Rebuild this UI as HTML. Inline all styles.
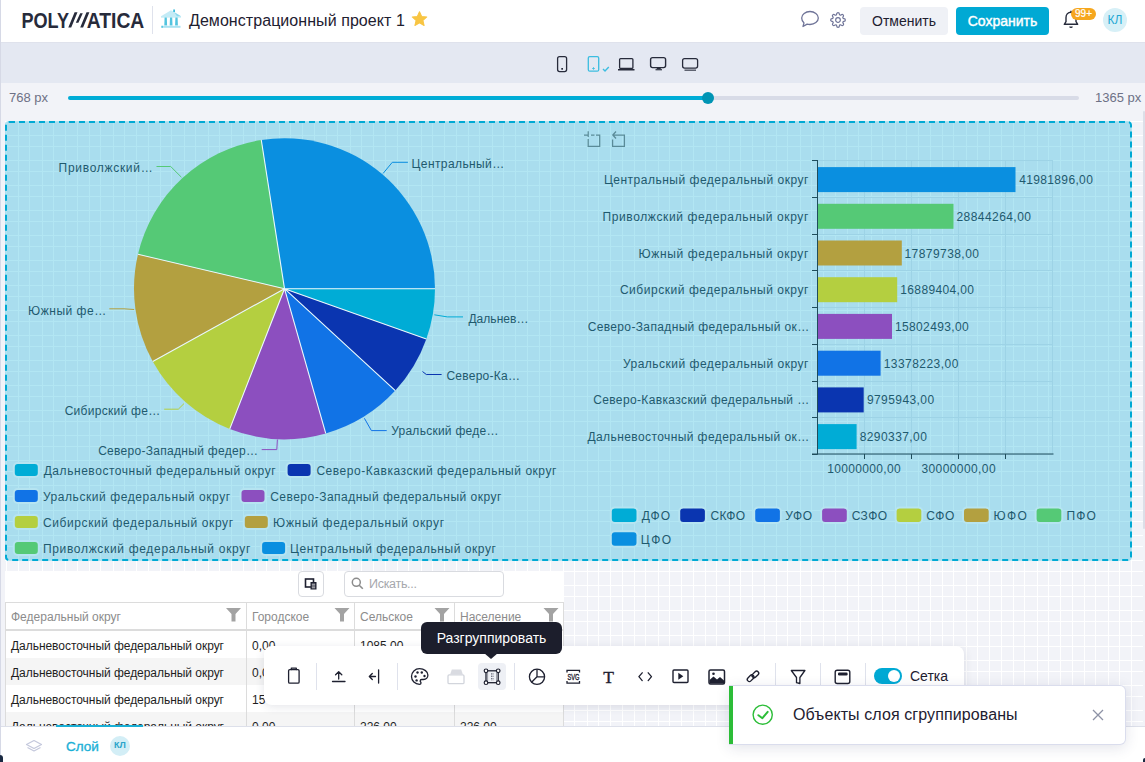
<!DOCTYPE html>
<html><head><meta charset="utf-8">
<style>
*{box-sizing:border-box;margin:0;padding:0}
html,body{width:1145px;height:762px;overflow:hidden;background:#f2f3f8;font-family:"Liberation Sans",sans-serif;color:#1e2030;position:relative}
.a{position:absolute}
#hdr{left:0;top:0;width:1145px;height:43px;background:#fff;border-bottom:1px solid #dfe2ec}
#strip{left:0;top:0;width:1px;height:762px;background:#d6d9e6;z-index:50}
#dev{left:0;top:43px;width:1145px;height:40px;background:#e4e8f2}
.t{white-space:nowrap;line-height:1}
.ct text{font-size:12px;fill:#1f5a6e;font-family:"Liberation Sans",sans-serif}

</style></head><body>
<svg class="a" style="left:0;top:0" width="1145" height="762"><path d="M6.5 121V762M18.5 121V762M29.5 121V762M42.5 121V762M53.5 121V762M65.5 121V762M77.5 121V762M89.5 121V762M100.5 121V762M113.5 121V762M124.5 121V762M136.5 121V762M148.5 121V762M160.5 121V762M171.5 121V762M184.5 121V762M195.5 121V762M208.5 121V762M219.5 121V762M231.5 121V762M243.5 121V762M255.5 121V762M266.5 121V762M279.5 121V762M290.5 121V762M302.5 121V762M314.5 121V762M326.5 121V762M337.5 121V762M350.5 121V762M361.5 121V762M373.5 121V762M385.5 121V762M397.5 121V762M408.5 121V762M421.5 121V762M432.5 121V762M444.5 121V762M456.5 121V762M468.5 121V762M479.5 121V762M492.5 121V762M503.5 121V762M515.5 121V762M527.5 121V762M539.5 121V762M550.5 121V762M563.5 121V762M574.5 121V762M587.5 121V762M598.5 121V762M610.5 121V762M622.5 121V762M634.5 121V762M645.5 121V762M658.5 121V762M669.5 121V762M681.5 121V762M693.5 121V762M705.5 121V762M716.5 121V762M729.5 121V762M740.5 121V762M752.5 121V762M764.5 121V762M776.5 121V762M787.5 121V762M800.5 121V762M811.5 121V762M823.5 121V762M835.5 121V762M847.5 121V762M858.5 121V762M871.5 121V762M882.5 121V762M895.5 121V762M906.5 121V762M918.5 121V762M930.5 121V762M942.5 121V762M953.5 121V762M966.5 121V762M977.5 121V762M989.5 121V762M1001.5 121V762M1013.5 121V762M1024.5 121V762M1037.5 121V762M1048.5 121V762M1060.5 121V762M1072.5 121V762M1084.5 121V762M1095.5 121V762M1108.5 121V762M1119.5 121V762M1131.5 121V762M5 121.5H1143M5 135.5H1143M5 146.5H1143M5 160.5H1143M5 171.5H1143M5 185.5H1143M5 196.5H1143M5 210.5H1143M5 221.5H1143M5 235.5H1143M5 246.5H1143M5 260.5H1143M5 271.5H1143M5 285.5H1143M5 296.5H1143M5 310.5H1143M5 321.5H1143M5 335.5H1143M5 346.5H1143M5 360.5H1143M5 371.5H1143M5 385.5H1143M5 396.5H1143M5 410.5H1143M5 421.5H1143M5 435.5H1143M5 446.5H1143M5 460.5H1143M5 471.5H1143M5 485.5H1143M5 496.5H1143M5 510.5H1143M5 521.5H1143M5 535.5H1143M5 546.5H1143M5 560.5H1143M5 571.5H1143M5 585.5H1143M5 596.5H1143M5 610.5H1143M5 621.5H1143M5 635.5H1143M5 646.5H1143M5 660.5H1143M5 671.5H1143M5 685.5H1143M5 696.5H1143M5 710.5H1143M5 721.5H1143M5 735.5H1143M5 746.5H1143M5 760.5H1143" stroke="#fff" stroke-width="1" fill="none" shape-rendering="crispEdges"/></svg>
<svg class="a" style="left:0;top:0" width="1145" height="762">
<rect x="5" y="121" width="1127" height="440" rx="4" fill="rgba(0,172,214,0.3)"/><rect x="6" y="122" width="1125" height="438" rx="3" fill="none" stroke="#00a9d4" stroke-width="2" stroke-dasharray="6 4"/>
<g>
<path fill="#00acd6" d="M284.5 288.7L435.00 288.70A150.5 150.5 0 0 1 426.35 339.00Z"/>
<path fill="#0a35b0" d="M284.5 288.7L426.35 339.00A150.5 150.5 0 0 1 395.29 390.56Z"/>
<path fill="#1173e6" d="M284.5 288.7L395.29 390.56A150.5 150.5 0 0 1 325.73 433.44Z"/>
<path fill="#8c4fbf" d="M284.5 288.7L325.73 433.44A150.5 150.5 0 0 1 229.79 428.90Z"/>
<path fill="#b4cf40" d="M284.5 288.7L229.79 428.90A150.5 150.5 0 0 1 152.75 361.45Z"/>
<path fill="#b3a040" d="M284.5 288.7L152.75 361.45A150.5 150.5 0 0 1 137.98 254.33Z"/>
<path fill="#55c976" d="M284.5 288.7L137.98 254.33A150.5 150.5 0 0 1 261.29 140.00Z"/>
<path fill="#0a8fe0" d="M284.5 288.7L261.29 140.00A150.5 150.5 0 0 1 435.00 288.70Z"/>
</g><path d="M284.5 288.7L435.00 288.70M284.5 288.7L426.35 339.00M284.5 288.7L395.29 390.56M284.5 288.7L325.73 433.44M284.5 288.7L229.79 428.90M284.5 288.7L152.75 361.45M284.5 288.7L137.98 254.33M284.5 288.7L261.29 140.00" stroke="#e9f7fb" stroke-width="1.1" fill="none"/>
<g stroke-width="1"><path d="M434.3 314.8L447.3 316.9L463 316.9" stroke="#00acd6" fill="none"/><path d="M422.5 371.5L426.3 374.5L441.6 374.5" stroke="#0a35b0" fill="none"/><path d="M364.4 418.3L371.4 430.6L386.7 430.6" stroke="#1173e6" fill="none"/><path d="M277.4 439.5L276.8 449.6L261.7 449.6" stroke="#8c4fbf" fill="none"/><path d="M184.1 403.5L178.3 409.2L164.2 409.2" stroke="#b4cf40" fill="none"/><path d="M134.1 309.5L124 308.8L109.3 308.8" stroke="#b3a040" fill="none"/><path d="M181.4 177.2L170.7 166.5L156.5 166.5" stroke="#55c976" fill="none"/><path d="M383.1 173.4L392.3 162.3L407.9 162.3" stroke="#0a8fe0" fill="none"/></g>
<g class="ct"><text x="468.42" y="322.6" textLength="59.98">Дальнев…</text><text x="446.38" y="380.3" textLength="73.54">Северо-Ка…</text><text x="391.14" y="435.2" textLength="107.30">Уральский феде…</text><text x="98.16" y="455.0" textLength="159.74">Северо-Западный федер…</text><text x="64.66" y="415.2" textLength="95.50">Сибирский фе…</text><text x="28.10" y="314.5" textLength="78.08">Южный фе…</text><text x="58.62" y="172.0" textLength="94.04">Приволжский…</text><text x="411.60" y="168.1" textLength="92.54">Центральный…</text></g>
<g class="ct"><rect x="12.8" y="462" width="27" height="16" rx="5" fill="#b6e4f1"/><rect x="14.8" y="464" width="23" height="12" rx="3" fill="#00acd6"/><text x="43.68" y="475.3" textLength="231.92">Дальневосточный федеральный округ</text><rect x="285.6" y="462" width="27" height="16" rx="5" fill="#b6e4f1"/><rect x="287.6" y="464" width="23" height="12" rx="3" fill="#0a35b0"/><text x="316.42" y="475.3" textLength="239.94">Северо-Кавказский федеральный округ</text><rect x="12.8" y="488" width="27" height="16" rx="5" fill="#b6e4f1"/><rect x="14.8" y="490" width="23" height="12" rx="3" fill="#1173e6"/><text x="42.88" y="501.3" textLength="187.24">Уральский федеральный округ</text><rect x="239.5" y="488" width="27" height="16" rx="5" fill="#b6e4f1"/><rect x="241.5" y="490" width="23" height="12" rx="3" fill="#8c4fbf"/><text x="270.16" y="501.3" textLength="231.18">Северо-Западный федеральный округ</text><rect x="12.8" y="514" width="27" height="16" rx="5" fill="#b6e4f1"/><rect x="14.8" y="516" width="23" height="12" rx="3" fill="#b4cf40"/><text x="42.88" y="527.3" textLength="190.24">Сибирский федеральный округ</text><rect x="242.8" y="514" width="27" height="16" rx="5" fill="#b6e4f1"/><rect x="244.8" y="516" width="23" height="12" rx="3" fill="#b3a040"/><text x="273.12" y="527.3" textLength="171.00">Южный федеральный округ</text><rect x="12.8" y="540" width="27" height="16" rx="5" fill="#b6e4f1"/><rect x="14.8" y="542" width="23" height="12" rx="3" fill="#55c976"/><text x="42.88" y="553.3" textLength="207.46">Приволжский федеральный округ</text><rect x="260.1" y="540" width="27" height="16" rx="5" fill="#b6e4f1"/><rect x="262.1" y="542" width="23" height="12" rx="3" fill="#0a8fe0"/><text x="290.10" y="553.3" textLength="205.76">Центральный федеральный округ</text></g>
<path d="M817 160.5H1053M817 197.5H1053M817 234.5H1053M817 270.5H1053M817 307.5H1053M817 344.5H1053M817 381.5H1053M817 417.5H1053M817 454.5H1053M864.5 160V454M911.5 160V454M958.5 160V454M1005.5 160V454M1052.5 160V454" stroke="#9dd3e6" stroke-width="1" fill="none"/>
<rect x="817.5" y="167.1" width="198.0" height="25" fill="#0a8fe0"/><rect x="817.5" y="203.8" width="136.0" height="25" fill="#55c976"/><rect x="817.5" y="240.5" width="84.3" height="25" fill="#b3a040"/><rect x="817.5" y="277.2" width="79.7" height="25" fill="#b4cf40"/><rect x="817.5" y="313.9" width="74.5" height="25" fill="#8c4fbf"/><rect x="817.5" y="350.7" width="63.1" height="25" fill="#1173e6"/><rect x="817.5" y="387.4" width="46.2" height="25" fill="#0a35b0"/><rect x="817.5" y="424.1" width="39.1" height="25" fill="#00acd6"/>
<path d="M817.5 160V454.5M812 454H1053.5M812 160.5H817.5M812 197.5H817.5M812 234.5H817.5M812 270.5H817.5M812 307.5H817.5M812 344.5H817.5M812 381.5H817.5M812 417.5H817.5M812 454.5H817.5M864.5 454V459M911.5 454V459M958.5 454V459M1005.5 454V459" stroke="#1f4d5c" stroke-width="1" fill="none"/>
<g class="ct"><text x="603.88" y="184.1" textLength="204.46">Центральный федеральный округ</text><text x="602.38" y="220.8" textLength="205.96">Приволжский федеральный округ</text><text x="638.62" y="257.5" textLength="169.72">Южный федеральный округ</text><text x="619.88" y="294.2" textLength="188.46">Сибирский федеральный округ</text><text x="587.64" y="330.9" textLength="221.50">Северо-Западный федеральный ок…</text><text x="622.88" y="367.7" textLength="185.46">Уральский федеральный округ</text><text x="593.14" y="404.4" textLength="216.00">Северо-Кавказский федеральный …</text><text x="587.44" y="441.1" textLength="221.70">Дальневосточный федеральный ок…</text></g>
<g class="ct"><text x="1019.18" y="184.1" textLength="73.66">41981896,00</text><text x="956.48" y="220.8" textLength="74.46">28844264,00</text><text x="904.43" y="257.5" textLength="74.52">17879738,00</text><text x="900.29" y="294.2" textLength="73.72">16889404,00</text><text x="894.96" y="330.9" textLength="73.72">15802493,00</text><text x="883.63" y="367.7" textLength="74.72">13378223,00</text><text x="866.90" y="404.4" textLength="67.22">9795943,00</text><text x="859.64" y="441.1" textLength="67.22">8290337,00</text></g>
<g class="ct"><text x="827.14" y="472.5" textLength="73.46">10000000,00</text><text x="921.40" y="472.5" textLength="74.20">30000000,00</text></g>
<g class="ct"><rect x="609.8" y="506.5" width="28.7" height="17.5" rx="5" fill="#b6e4f1"/><rect x="611.8" y="508.5" width="24.7" height="13.5" rx="3" fill="#00acd6"/><text x="641.66" y="520.3" textLength="28.44">ДФО</text><rect x="678.2" y="506.5" width="28.7" height="17.5" rx="5" fill="#b6e4f1"/><rect x="680.2" y="508.5" width="24.7" height="13.5" rx="3" fill="#0a35b0"/><text x="710.40" y="520.3" textLength="34.74">СКФО</text><rect x="753.2" y="506.5" width="28.7" height="17.5" rx="5" fill="#b6e4f1"/><rect x="755.2" y="508.5" width="24.7" height="13.5" rx="3" fill="#1173e6"/><text x="785.16" y="520.3" textLength="26.94">УФО</text><rect x="820.1" y="506.5" width="28.7" height="17.5" rx="5" fill="#b6e4f1"/><rect x="822.1" y="508.5" width="24.7" height="13.5" rx="3" fill="#8c4fbf"/><text x="851.64" y="520.3" textLength="35.48">СЗФО</text><rect x="894.6" y="506.5" width="28.7" height="17.5" rx="5" fill="#b6e4f1"/><rect x="896.6" y="508.5" width="24.7" height="13.5" rx="3" fill="#b4cf40"/><text x="926.16" y="520.3" textLength="28.22">СФО</text><rect x="962" y="506.5" width="28.7" height="17.5" rx="5" fill="#b6e4f1"/><rect x="964" y="508.5" width="24.7" height="13.5" rx="3" fill="#b3a040"/><text x="993.62" y="520.3" textLength="33.24">ЮФО</text><rect x="1034.6" y="506.5" width="28.7" height="17.5" rx="5" fill="#b6e4f1"/><rect x="1036.6" y="508.5" width="24.7" height="13.5" rx="3" fill="#55c976"/><text x="1066.40" y="520.3" textLength="29.48">ПФО</text><rect x="609.8" y="530.3" width="28.7" height="17.5" rx="5" fill="#b6e4f1"/><rect x="611.8" y="532.3" width="24.7" height="13.5" rx="3" fill="#0a8fe0"/><text x="640.86" y="544.1" textLength="30.24">ЦФО</text></g>
<g fill="none" stroke="#5a8b98" stroke-width="1.25">
<path d="M584 135H588.5M591 135H594.5M596 135H599.7V146.3H588.2V139M588.2 137V131.2" />
<path d="M612.6 139.6V146.3H624.4V135H613M616 131.5L612.8 135L616 138.5"/>
</g>
</svg>
<!-- table widget -->
<div class="a" style="left:5px;top:571px;width:559px;height:156px;background:#fff"></div>
<div class="a" style="left:298px;top:571px;width:26px;height:26px;border:1px solid #d9dbe0;border-radius:4px;background:#fff"></div>
<svg class="a" style="left:303px;top:576px" width="16" height="16" viewBox="0 0 16 16"><rect x="2.5" y="3" width="8" height="8" fill="none" stroke="#1e2030" stroke-width="1.6"/><rect x="7.5" y="6" width="6" height="7.5" fill="#1e2030"/><path d="M8.8 8.2h3.4M8.8 10h3.4M8.8 11.8h3.4" stroke="#fff" stroke-width="0.8"/></svg>
<div class="a" style="left:344px;top:571px;width:160px;height:26px;border:1px solid #d9dbe0;border-radius:4px;background:#fff"></div>
<svg class="a" style="left:351px;top:577px" width="13" height="13" viewBox="0 0 13 13"><circle cx="5.3" cy="5.3" r="4" fill="none" stroke="#8c8c8c" stroke-width="1.5"/><path d="M8.2 8.2l3.6 3.6" stroke="#8c8c8c" stroke-width="1.6"/></svg>
<div class="a t" style="left:369px;top:578px;font-size:12.5px;letter-spacing:-0.3px;color:#a6a8ad">Искать...</div>
<!-- table -->
<div class="a" style="left:5px;top:602px;width:559px;height:125px;border:1px solid #dcdcdc;border-bottom:none"></div>
<div class="a" style="left:6px;top:629px;width:557px;height:2px;background:#dcdcdc"></div>
<div class="a" style="left:6px;top:658px;width:557px;height:27px;background:#f5f5f5"></div>
<div class="a" style="left:6px;top:712px;width:557px;height:15px;background:#f5f5f5"></div>
<div class="a" style="left:246px;top:603px;width:1px;height:124px;background:#dcdcdc"></div>
<div class="a" style="left:354px;top:603px;width:1px;height:124px;background:#dcdcdc"></div>
<div class="a" style="left:454px;top:603px;width:1px;height:124px;background:#dcdcdc"></div>
<div class="a t" style="left:11px;top:611px;font-size:12px;color:#8c8c8c">Федеральный округ</div>
<div class="a t" style="left:252px;top:611px;font-size:12px;color:#8c8c8c">Городское</div>
<div class="a t" style="left:360px;top:611px;font-size:12px;color:#8c8c8c">Сельское</div>
<div class="a t" style="left:460px;top:611px;font-size:12px;color:#8c8c8c">Население</div>
<svg class="a" style="left:0;top:600px" width="570" height="30">
  <g fill="#a3a3a3"><path d="M226 8h15l-5.5 6v7.5h-4V14z"/><path d="M334.5 8h15l-5.5 6v7.5h-4V14z"/><path d="M434.5 8h15l-5.5 6v7.5h-4V14z"/><path d="M543.5 8h15l-5.5 6v7.5h-4V14z"/></g>
</svg>
<div class="a" style="left:5px;top:630px;width:559px;height:97px;overflow:hidden">
  <div class="a t" style="left:6px;top:10px;font-size:12px;letter-spacing:-0.04px;color:#1e1e1e">Дальневосточный федеральный округ</div>
  <div class="a t" style="left:6px;top:37px;font-size:12px;letter-spacing:-0.04px;color:#1e1e1e">Дальневосточный федеральный округ</div>
  <div class="a t" style="left:6px;top:64px;font-size:12px;letter-spacing:-0.04px;color:#1e1e1e">Дальневосточный федеральный округ</div>
  <div class="a t" style="left:6px;top:91px;font-size:12px;letter-spacing:-0.04px;color:#1e1e1e">Дальневосточный федеральный округ</div>
  <div class="a t" style="left:247px;top:10px;font-size:12px;color:#1e1e1e">0,00</div>
  <div class="a t" style="left:247px;top:37px;font-size:12px;color:#1e1e1e">0,00</div>
  <div class="a t" style="left:247px;top:64px;font-size:12px;color:#1e1e1e">15</div>
  <div class="a t" style="left:247px;top:91px;font-size:12px;color:#1e1e1e">0,00</div>
  <div class="a t" style="left:355px;top:10px;font-size:12px;color:#1e1e1e">1085,00</div>
  <div class="a t" style="left:355px;top:91px;font-size:12px;color:#1e1e1e">226,00</div>
  <div class="a t" style="left:455px;top:91px;font-size:12px;color:#1e1e1e">226,00</div>
</div>

<!-- toolbar -->
<div class="a" style="left:264px;top:646px;width:700px;height:59px;background:#fff;border-radius:8px;box-shadow:0 2px 10px rgba(40,50,80,0.12)"></div>
<div class="a" style="left:478px;top:663px;width:28px;height:27px;background:#eef0f5;border-radius:4px"></div>
<svg class="a" style="left:264px;top:646px" width="700" height="59" viewBox="264 646 700 59">
  <g stroke="#dfe2ec" stroke-width="1"><path d="M316.5 663V690M397.5 663V690M514.5 663V690M775.5 663V690M820.5 663V690M865.5 663V690"/></g>
  <g fill="none" stroke="#1e2030" stroke-width="1.3" stroke-linejoin="round" stroke-linecap="round">
    <!-- clipboard -->
    <rect x="288.6" y="669.6" width="10.5" height="13.6" rx="1.2"/><path d="M291.3 669.6v-1.5h5v1.5"/>
    <!-- upload -->
    <path d="M332.5 681.5H345M338.7 679V671.8M335.6 674.8l3.1-3.1 3.1 3.1"/>
    <!-- arrow-left-bar -->
    <path d="M378.6 669.8V683M375.5 676.5H369.5M372.3 673.5L369.3 676.5L372.3 679.5"/>
    <!-- palette -->
    <path d="M419.5 668.7c-4.4 0-8 3.5-8 7.8s3.6 7.8 8 7.8c.9 0 1.5-.6 1.5-1.4 0-.4-.2-.7-.4-1-.2-.3-.4-.6-.4-1 0-.8.7-1.4 1.5-1.4h1.8c2.5 0 4.4-2 4.4-4.4 0-3.4-3.7-6.4-8.4-6.4z"/>
  </g>
  <g fill="#1e2030"><circle cx="415.5" cy="676.5" r="1.2"/><circle cx="417.5" cy="672.5" r="1.2"/><circle cx="421.8" cy="672.5" r="1.2"/><circle cx="424.5" cy="676" r="1.2"/><circle cx="416.6" cy="680.4" r="1.2"/></g>
  <!-- disabled layer -->
  <path d="M450.2 674.2l1.6-4.6h9.4l1.6 4.6z" fill="#d9dbe1"/>
  <rect x="448" y="674.8" width="16" height="8.8" rx="1.2" fill="none" stroke="#d2d5dc" stroke-width="1.3"/>
  <!-- ungroup -->
  <g fill="none" stroke="#1e2030" stroke-width="1.3">
    <rect x="486" y="670.8" width="12.2" height="11.9"/>
  </g>
  <path d="M487.6 672.5v8.5M496.6 672.5v8.5" stroke="#8a8d99" stroke-width="0.9"/>
  <g fill="#fff" stroke="#1e2030" stroke-width="1.2"><circle cx="486" cy="670.8" r="1.8"/><circle cx="498.2" cy="670.8" r="1.8"/><circle cx="486" cy="682.7" r="1.8"/><circle cx="498.2" cy="682.7" r="1.8"/></g>
  <path d="M491.5 673.2v7.5M493 673.2v7.5" stroke="#55586a" stroke-width="0.8" stroke-dasharray="1.4 1"/>
  <!-- pie -->
  <g fill="none" stroke="#1e2030" stroke-width="1.3"><circle cx="537" cy="676.8" r="7.6"/><path d="M537 669.2v7.6h7.6M537 676.8l-5.4 5.4"/></g>
  <!-- svg -->
  <g fill="none" stroke="#1e2030" stroke-width="1.3"><path d="M567 672.5v-2.2h12.5v2.2M567 681v2.2h12.5v-2.2"/></g>
  <text x="567.4" y="680" font-size="8.2" fill="#1e2030" stroke="#1e2030" stroke-width="0.35" font-family="Liberation Sans" textLength="12" lengthAdjust="spacingAndGlyphs">SVG</text>
  <!-- T -->
  <text x="608.5" y="682.8" font-size="17.5" text-anchor="middle" fill="#1e2030" font-family="Liberation Serif" stroke="#1e2030" stroke-width="0.35">T</text>
  <!-- code -->
  <g fill="none" stroke="#1e2030" stroke-width="1.3" stroke-linecap="round" stroke-linejoin="round"><path d="M642.2 672.8l-3.3 3.9 3.3 3.9M648.2 672.8l3.3 3.9-3.3 3.9"/></g>
  <!-- video -->
  <g fill="none" stroke="#1e2030" stroke-width="1.4"><rect x="673" y="670" width="15" height="12.5" rx="1"/></g><path d="M678.3 672.8v7l5-3.5z" fill="#1e2030"/>
  <!-- image -->
  <rect x="709" y="670" width="15.5" height="14" rx="1.5" fill="none" stroke="#1e2030" stroke-width="1.5"/>
  <path d="M709.5 683.5v-3.5l4-3.5 3.5 3 3-2.5 4 3.5v3z" fill="#1e2030"/><circle cx="713.5" cy="673.8" r="1.3" fill="#1e2030"/>
  <!-- link -->
  <g fill="none" stroke="#1e2030" stroke-width="1.35"><rect x="746.8" y="676.1" width="7.6" height="4.2" rx="2.1" transform="rotate(-45 750.6 678.2)"/><rect x="751.6" y="672.3" width="7.6" height="4.2" rx="2.1" transform="rotate(-45 755.4 674.4)"/></g>
  <!-- filter -->
  <path d="M791.3 670.5h13.6l-5 7v6l-3.4-0.8v-5.2z" fill="none" stroke="#1e2030" stroke-width="1.3" stroke-linejoin="round"/>
  <!-- window -->
  <rect x="835.2" y="670.2" width="14.6" height="13.3" rx="2" fill="none" stroke="#1e2030" stroke-width="1.4"/><rect x="838" y="672.5" width="9.6" height="3" rx="1.2" fill="#1e2030"/>
  <!-- toggle -->
  <rect x="874" y="668" width="28" height="16" rx="8" fill="#00a9d4"/><circle cx="894" cy="676" r="6" fill="#fff"/>
</svg>
<div class="a t" style="left:910px;top:669px;font-size:14px;color:#1e2030">Сетка</div>

<!-- tooltip -->
<div class="a t" style="left:421px;top:622px;width:141px;height:32px;background:#1c1e2c;border-radius:6px;color:#fff;font-size:14px;text-align:center;padding-top:9px">Разгруппировать</div>
<svg class="a" style="left:484px;top:653px" width="14" height="7"><path d="M0 0h14L7 6z" fill="#1c1e2c"/></svg>

<!-- bottom panel -->
<div class="a" style="left:0;top:726px;width:1145px;height:36px;background:#fff;border-top:1px solid #dde0ea"></div>
<div class="a" style="left:56px;top:725px;width:87px;height:2px;background:#1ab0d6"></div>
<svg class="a" style="left:25px;top:739px" width="18" height="16" viewBox="0 0 18 16"><path d="M9 1.5L16.5 5.5 9 9.5 1.5 5.5z" fill="none" stroke="#c4c8dc" stroke-width="1.2" stroke-linejoin="round"/><path d="M2.5 8.5L9 12 15.5 8.5" fill="none" stroke="#c4c8dc" stroke-width="1.2" stroke-linejoin="round"/></svg>
<div class="a t" style="left:66px;top:740px;font-size:13.5px;color:#1ab0d6;-webkit-text-stroke:0.35px #1ab0d6">Слой</div>
<div class="a t" style="left:110px;top:736px;width:20px;height:20px;background:#d3eef6;border-radius:50%;font-size:9px;color:#2aa4ca;text-align:center;padding-top:5px;font-weight:bold">КЛ</div>

<!-- toast -->
<div class="a" style="left:729px;top:685px;width:397px;height:60px;background:#fff;border-radius:0 6px 6px 0;border:1px solid #dadded;border-left:none;box-shadow:0 3px 14px rgba(40,50,90,0.13);overflow:hidden"><div class="a" style="left:0;top:-1px;width:4px;height:61px;background:#2cbd38"></div></div>
<svg class="a" style="left:751px;top:703px" width="23" height="23" viewBox="0 0 23 23"><circle cx="11.7" cy="11.7" r="9.6" fill="none" stroke="#2cbd38" stroke-width="1.4"/><path d="M7.4 12.2l4 3 5.3-6.3" fill="none" stroke="#2cbd38" stroke-width="2" stroke-linecap="round" stroke-linejoin="round"/></svg>
<div class="a t" style="left:793px;top:707px;font-size:16px;letter-spacing:0.1px;color:#1e2030">Объекты слоя сгруппированы</div>
<svg class="a" style="left:1092px;top:709px" width="12" height="12" viewBox="0 0 12 12"><path d="M1 1l10 10M11 1L1 11" stroke="#8d92a6" stroke-width="1.3"/></svg>

<!-- header -->
<div id="hdr" class="a">
  <svg class="a" style="left:0;top:0" width="150" height="40" viewBox="0 0 150 40">
    <text x="21.5" y="27.8" font-family="Liberation Sans" font-weight="bold" font-size="22.5" fill="#272b3b" textLength="47.5" lengthAdjust="spacingAndGlyphs">POLY</text>
    <path d="M74.6 12.2h2.9L71.2 27.6h-2.9z M80.2 13.2h2.6L78.4 22.7h-2.6z M86.5 12.2h2.9L83.1 27.6h-2.9z" fill="#272b3b"/>
    <text x="86.8" y="27.8" font-family="Liberation Sans" font-weight="bold" font-size="22.5" fill="#272b3b" textLength="57.5" lengthAdjust="spacingAndGlyphs">ATICA</text>
  </svg>
  <div class="a" style="left:152px;top:6px;width:1px;height:28px;background:#dfe2ec"></div>
  <svg class="a" style="left:160px;top:9px" width="22" height="20" viewBox="0 0 22 20">
    <path d="M11 1.2L21 7.3H1z" fill="#c4ebf6"/><path d="M14 3L21 7.3H17z" fill="#8fd9ec"/><rect x="13.2" y="0.5" width="1.8" height="2.5" fill="#3dbddc"/>
    <rect x="1" y="7.3" width="20" height="1.2" fill="#b0e5f2"/>
    <path d="M4.6 8.5h2.2l.3 8h-2.8z M10 8.5h2.2l.3 8h-2.8z M15.4 8.5h2.2l.3 8h-2.8z" fill="#52c4df"/>
    <rect x="1.5" y="16.8" width="19" height="2" fill="#a8e2f1"/><rect x="1.5" y="16.8" width="1.2" height="2" fill="#3dbddc"/>
  </svg>
  <div class="a t" style="left:189px;top:13px;font-size:16px;letter-spacing:0.06px;color:#1e2030">Демонстрационный проект 1</div>
  <svg class="a" style="left:411px;top:11px" width="17" height="16" viewBox="0 0 24 23"><path d="M12 1l3.1 6.9 7.4.7-5.6 5 1.7 7.3L12 17.1 5.4 20.9l1.7-7.3-5.6-5 7.4-.7z" fill="#f8c543" stroke="#f8c543" stroke-width="1.5" stroke-linejoin="round"/></svg>
  <!-- right side -->
  <svg class="a" style="left:800px;top:10px" width="20" height="18" viewBox="0 0 20 18"><path d="M10 1.5c4.6 0 8.3 2.9 8.3 6.5S14.6 14.5 10 14.5c-1 0-2-.1-2.9-.4L3 16.5l1-3.6C2.5 11.7 1.7 10 1.7 8 1.7 4.4 5.4 1.5 10 1.5z" fill="none" stroke="#6f7498" stroke-width="1.3" stroke-linejoin="round"/></svg>
  <svg class="a" style="left:830px;top:12px" width="16" height="16" viewBox="0 0 24 24"><path d="M12 15.5a3.5 3.5 0 1 0 0-7 3.5 3.5 0 0 0 0 7z" fill="none" stroke="#6f7498" stroke-width="1.8"/><path d="M19.4 15a1.65 1.65 0 0 0 .33 1.82l.06.06a2 2 0 1 1-2.83 2.83l-.06-.06a1.65 1.65 0 0 0-1.82-.33 1.65 1.65 0 0 0-1 1.51V21a2 2 0 0 1-4 0v-.09A1.65 1.65 0 0 0 9 19.4a1.65 1.65 0 0 0-1.82.33l-.06.06a2 2 0 1 1-2.83-2.83l.06-.06A1.65 1.65 0 0 0 4.68 15a1.65 1.65 0 0 0-1.51-1H3a2 2 0 0 1 0-4h.09A1.65 1.65 0 0 0 4.6 9a1.65 1.65 0 0 0-.33-1.82l-.06-.06a2 2 0 1 1 2.83-2.83l.06.06A1.65 1.65 0 0 0 9 4.68a1.65 1.65 0 0 0 1-1.51V3a2 2 0 0 1 4 0v.09a1.65 1.65 0 0 0 1 1.51 1.65 1.65 0 0 0 1.82-.33l.06-.06a2 2 0 1 1 2.83 2.83l-.06.06A1.65 1.65 0 0 0 19.4 9a1.65 1.65 0 0 0 1.51 1H21a2 2 0 0 1 0 4h-.09a1.65 1.65 0 0 0-1.51 1z" fill="none" stroke="#6f7498" stroke-width="1.8"/></svg>
  <div class="a t" style="left:860px;top:7px;width:88px;height:28px;background:#eff1f6;border-radius:4px;font-size:14px;color:#1e2030;text-align:center;padding-top:7px">Отменить</div>
  <div class="a t" style="left:956px;top:7px;width:93px;height:28px;background:#00a9d4;border-radius:4px;font-size:14px;-webkit-text-stroke:0.4px #fff;color:#fff;text-align:center;padding-top:7px">Сохранить</div>
  <svg class="a" style="left:1062px;top:10px" width="18" height="19" viewBox="0 0 18 19"><path d="M9 2.2c-3 0-5 2.3-5 5.2v4.3L2.3 14.3h13.4L14 11.7V7.4c0-2.9-2-5.2-5-5.2z" fill="none" stroke="#272b3b" stroke-width="1.4" stroke-linejoin="round"/><path d="M7.2 16.5h3.6a1.8 1.6 0 0 1-3.6 0z" fill="#272b3b"/><path d="M9 .8v1.4" stroke="#272b3b" stroke-width="1.4"/></svg>
  <div class="a t" style="left:1071px;top:8px;width:25px;height:12px;background:#f6a71e;border-radius:6px;font-size:10px;color:#fff;text-align:center;padding-top:1px;-webkit-text-stroke:0.2px #fff">99+</div>
  <div class="a t" style="left:1103px;top:8px;width:24px;height:24px;background:#d7f0f7;border-radius:50%;font-size:12px;color:#1fa8d4;text-align:center;padding-top:6px">КЛ</div>
</div>

<div id="dev" class="a"></div>
<svg class="a" style="left:550px;top:50px" width="160" height="30" viewBox="550 50 160 30">
  <rect x="557.6" y="56.6" width="9" height="15" rx="2" fill="none" stroke="#272b3b" stroke-width="1.3"/>
  <rect x="561.3" y="68" width="1.7" height="1.7" fill="#272b3b"/>
  <rect x="588.3" y="56.6" width="10.4" height="14.6" rx="1.5" fill="none" stroke="#3cbde0" stroke-width="1.3"/>
  <path d="M593.5 67.2v2.5M592.2 68.5h2.6" stroke="#3cbde0" stroke-width="0.9"/>
  <path d="M603 69l2 2 3.8-4" fill="none" stroke="#3cbde0" stroke-width="1.4"/>
  <rect x="619.6" y="58.6" width="13.3" height="9.8" rx="1" fill="none" stroke="#272b3b" stroke-width="1.3"/>
  <rect x="618" y="69" width="16.5" height="1.5" fill="#272b3b"/>
  <rect x="650.6" y="57.6" width="15" height="10" rx="2" fill="none" stroke="#272b3b" stroke-width="1.4"/>
  <path d="M657 68h3.5l.6 1.3h-4.7z" fill="#272b3b"/><rect x="655.5" y="69.2" width="6.5" height="1.1" fill="#272b3b"/>
  <rect x="682.6" y="58.6" width="15" height="9.5" rx="2" fill="none" stroke="#272b3b" stroke-width="1.3"/>
  <rect x="684.5" y="69.6" width="11.5" height="1.1" fill="#272b3b"/>
</svg>
<div class="a t" style="left:9px;top:91px;font-size:13px;color:#6d7186">768 px</div>
<div class="a" style="left:68px;top:96px;width:640px;height:4px;background:#00acd6;border-radius:2px"></div>
<div class="a" style="left:706px;top:96px;width:373px;height:4px;background:#d8dbe7;border-radius:2px"></div>
<div class="a" style="left:702px;top:92px;width:12px;height:12px;background:#0094b4;border-radius:50%"></div>
<div class="a t" style="left:1095px;top:91px;font-size:13px;color:#6d7186">1365 px</div>
<div class="a" style="left:1143px;top:111px;width:2px;height:418px;background:#dcdfe8;border-radius:1px"></div>

<div id="strip" class="a"></div><div class="a" style="left:0;top:755px;width:2.5px;height:7px;background:#1a2942;border-top-right-radius:3px;z-index:51"></div><div class="a" style="left:1143px;top:758px;width:2px;height:4px;background:#1a2942;border-top-left-radius:2px;z-index:51"></div>
</body></html>
